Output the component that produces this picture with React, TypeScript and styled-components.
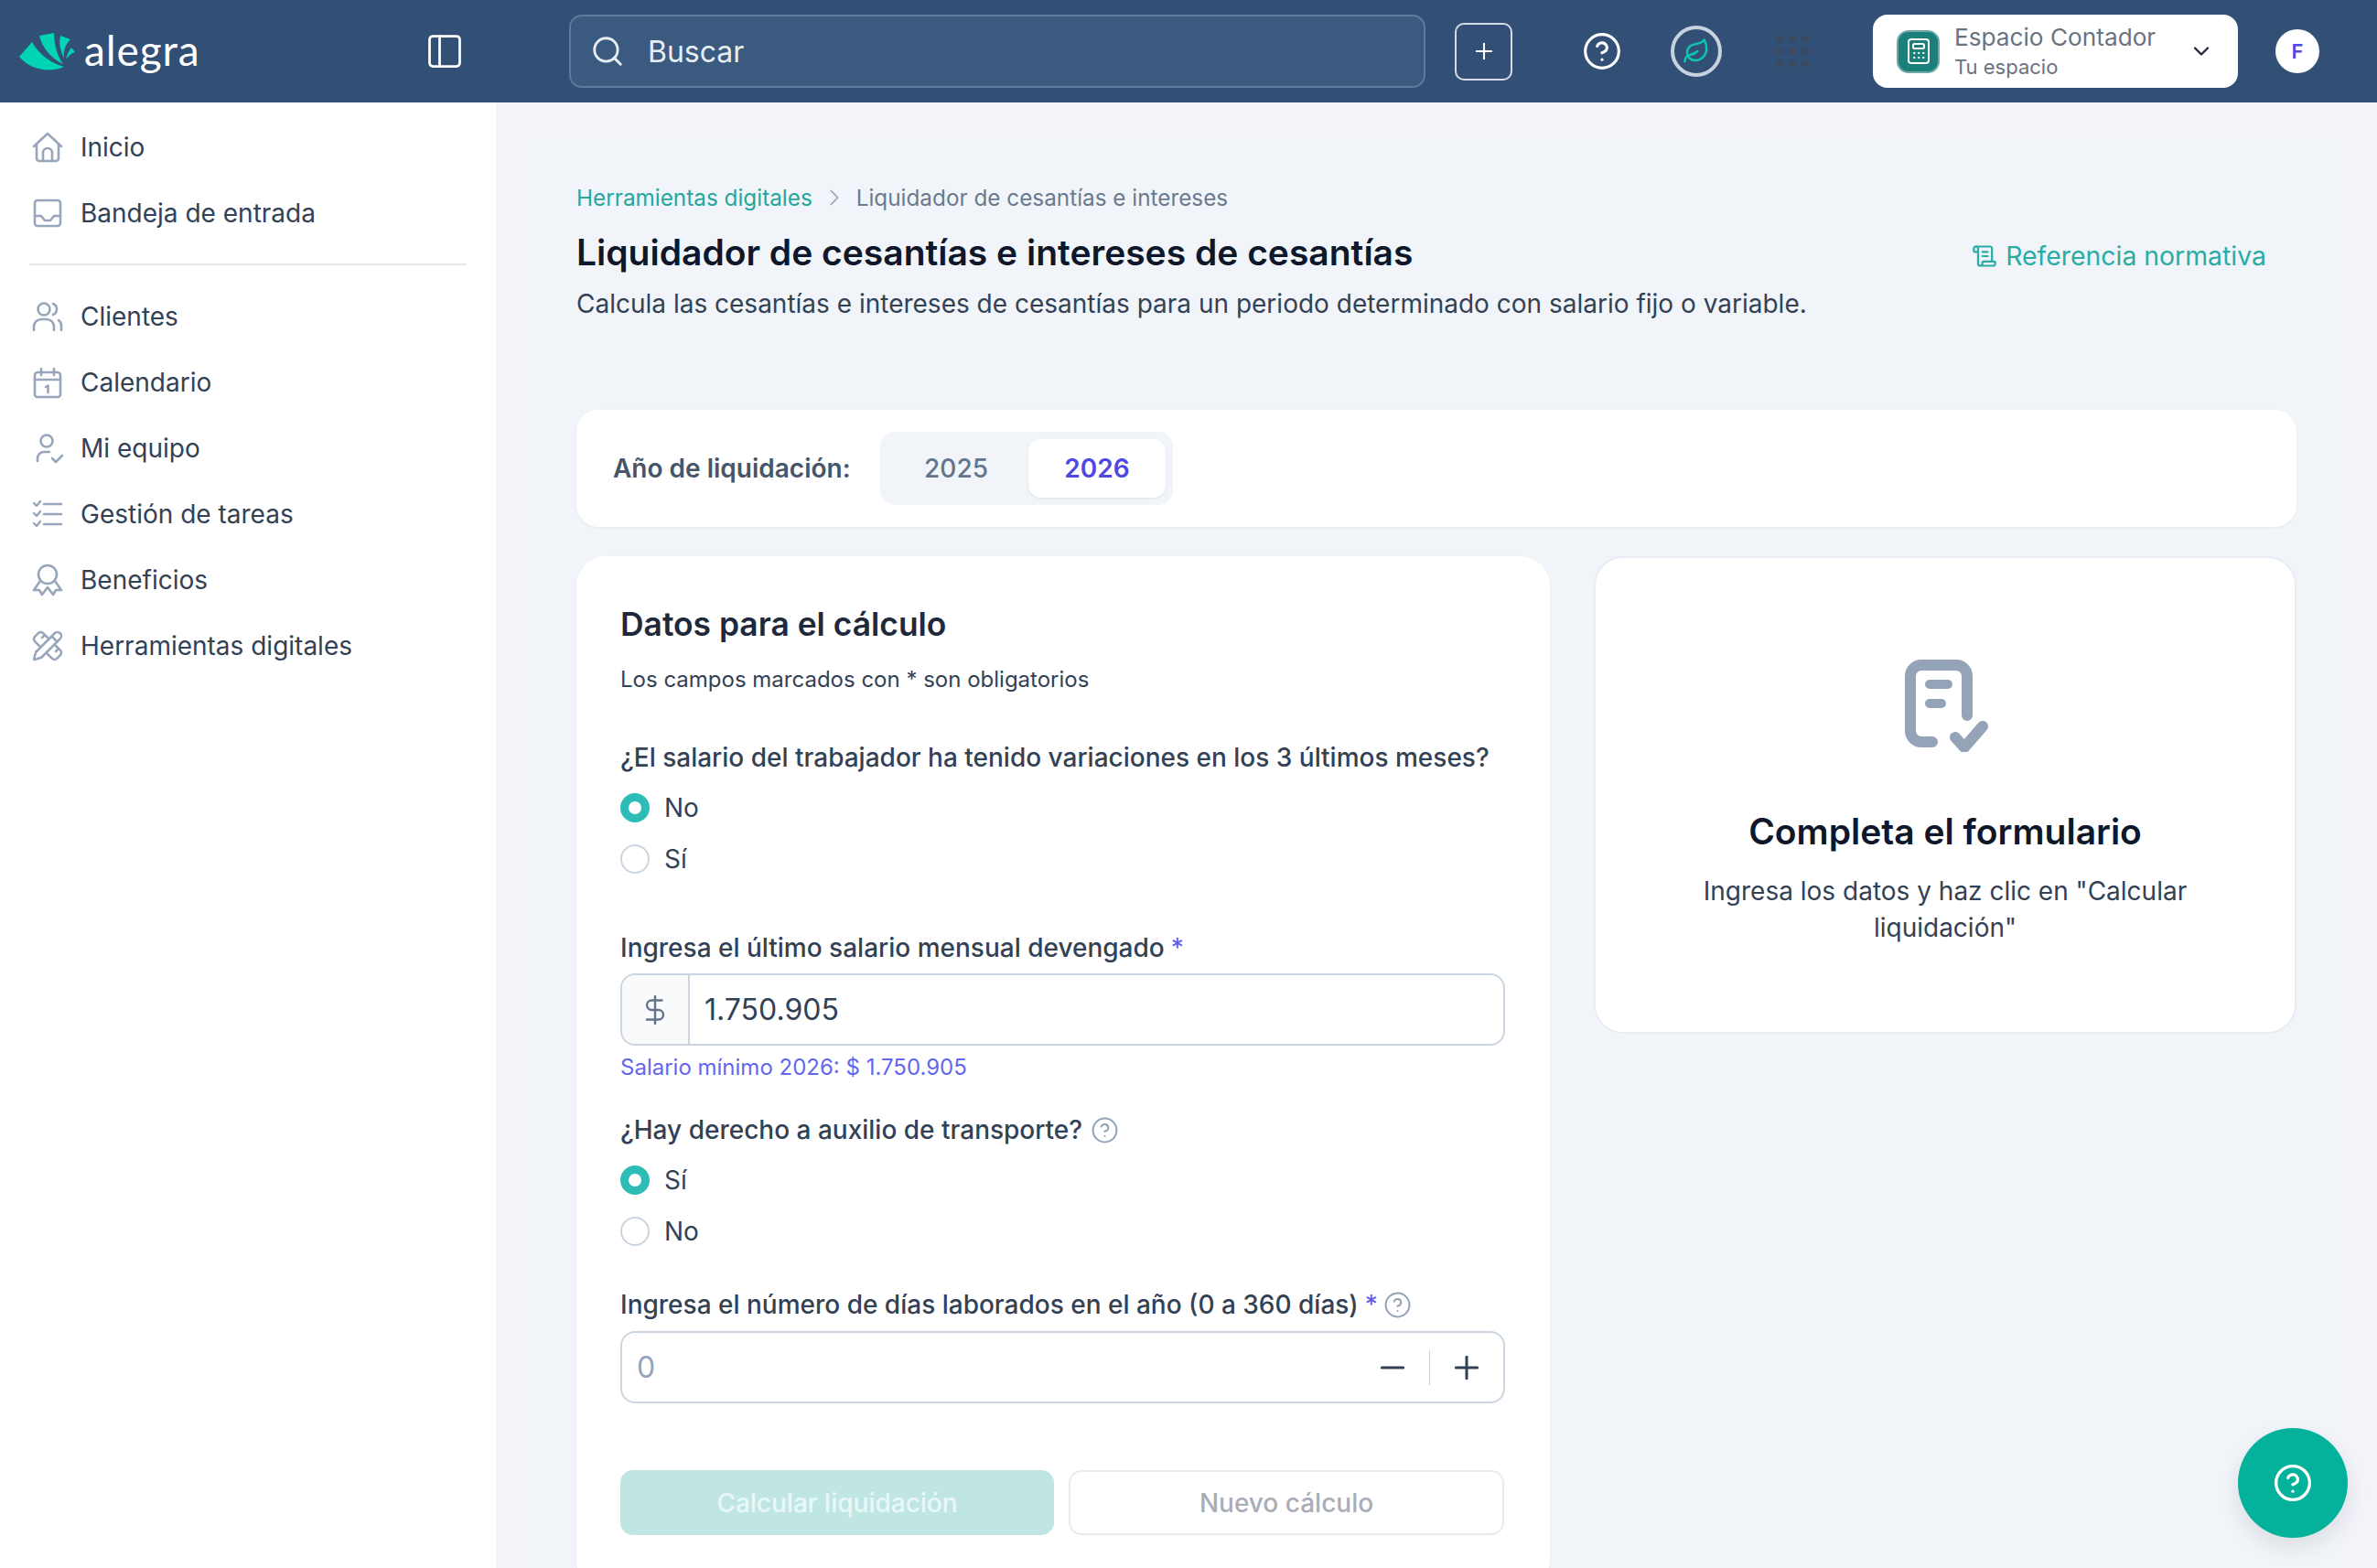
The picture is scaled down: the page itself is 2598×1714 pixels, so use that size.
import styled, { createGlobalStyle } from 'styled-components';
import {
  ChevronDown,
  ChevronRight,
  CircleHelp,
  DollarSign,
  Leaf,
  Minus,
  PanelLeft,
  PencilRuler,
  Plus,
  ScrollText,
  Search,
} from 'lucide-react';

const GlobalStyle = createGlobalStyle`
  * {
    box-sizing: border-box;
  }

  html,
  body {
    margin: 0;
    padding: 0;
    height: 100%;
    overflow: hidden;
    font-family: Inter, "Liberation Sans", sans-serif;
    background-color: #f3f4fa;
  }
`;

const Page = styled.div`
  display: grid;
  grid-template-columns: 542px 1fr;
  grid-template-rows: 112px 1fr;
  width: 2598px;
  height: 1714px;
  overflow: hidden;
`;

const Header = styled.header`
  grid-column: 1 / 3;
  display: flex;
  align-items: center;
  padding-left: 18px;
  background-color: #324f75;
  color: #fff;
`;

const LogoWrap = styled.div`
  display: flex;
  align-items: center;
  width: 490px;
  gap: 4px;
`;

const LogoText = styled.span`
  font-family: Lato, sans-serif;
  font-size: 46px;
  line-height: 50px;
  letter-spacing: 0.9px;
  color: #fff;
  margin-top: -3px;
`;

const IconButton = styled.button`
  display: flex;
  align-items: center;
  justify-content: center;
  padding: 0;
  border: 0;
  background: none;
  color: inherit;
`;

const ToggleButton = styled(IconButton)`
  margin-left: auto;
`;

const SearchBox = styled.div`
  display: flex;
  align-items: center;
  gap: 25px;
  width: 936px;
  height: 80px;
  margin-left: 114px;
  padding-left: 21px;
  background-color: #3b5a80;
  border: 2px solid #5f7a9b;
  border-radius: 14px;
  font-size: 32px;
  color: #e8edf3;
`;

const AddButton = styled(IconButton)`
  width: 63px;
  height: 63px;
  margin-left: 32px;
  border: 2px solid #d5dce6;
  border-radius: 10px;
`;

const HelpButton = styled(IconButton)`
  margin-left: 76px;
`;

const LeafButton = styled(IconButton)`
  width: 56px;
  height: 56px;
  margin-left: 53px;
  border: 4px solid #c8d1de;
  border-radius: 50%;
  color: #0cc7ad;
`;

const AppsGrid = styled.div`
  display: grid;
  grid-template-columns: repeat(3, 8px);
  grid-auto-rows: 8px;
  gap: 6px;
  margin-left: 59px;
`;

const AppsDot = styled.span`
  border-radius: 50%;
  background-color: #3c4a5f;
`;

const Workspace = styled.div`
  display: flex;
  align-items: center;
  width: 399px;
  height: 80px;
  margin-left: 70px;
  padding: 0 26px;
  background-color: #fff;
  border-radius: 16px;
  color: #1f2937;
`;

const WorkspaceIcon = styled.div`
  display: flex;
  align-items: center;
  justify-content: center;
  width: 47px;
  height: 47px;
  flex-shrink: 0;
  background-color: #1b7f7a;
  border: 2px solid #6fa9a7;
  border-radius: 13px;
`;

const WorkspaceText = styled.div`
  flex: 1;
  margin-left: 16px;
`;

const WorkspaceName = styled.div`
  font-size: 26.2px;
  line-height: 34px;
  color: #6b7280;
`;

const WorkspaceSub = styled.div`
  font-size: 22px;
  line-height: 30px;
  color: #6b7280;
`;

const Avatar = styled.div`
  display: flex;
  align-items: center;
  justify-content: center;
  width: 48px;
  height: 48px;
  margin-left: 41px;
  border-radius: 50%;
  background-color: #fff;
  color: #4f46e5;
  font-size: 22px;
  font-weight: 600;
`;

const Sidebar = styled.nav`
  padding: 13px 32px 0;
  background-color: #fff;
`;

const NavItem = styled.a`
  display: flex;
  align-items: center;
  gap: 18px;
  height: 72px;
  font-size: 28px;
  color: #334155;
`;

const NavIcon = styled.span`
  display: flex;
  align-items: center;
  justify-content: center;
  width: 36px;
  height: 36px;
  margin-left: 2px;
  color: #98a6bc;
`;

const NavDivider = styled.hr`
  height: 2px;
  margin: 19px 0 20px;
  border: 0;
  background-color: #e5e7eb;
`;

const Main = styled.main`
  padding: 40px 41px 0 40px;
  min-width: 0;
`;

const Panel = styled.div`
  height: 100%;
  padding: 48px 47px 0 48px;
  background-color: #f1f5f9;
`;

const Breadcrumb = styled.div`
  display: flex;
  align-items: center;
  gap: 9px;
  font-size: 24.3px;
  line-height: 32px;
  color: #6b7a90;
`;

const CrumbLink = styled.a`
  color: #27a59f;
`;

const TitleRow = styled.div`
  display: flex;
  align-items: flex-start;
  justify-content: space-between;
  margin-top: 18px;
`;

const Title = styled.h1`
  margin: 0;
  font-size: 39px;
  line-height: 52px;
  font-weight: 600;
  color: #0f172a;
`;

const RefLink = styled.a`
  display: flex;
  align-items: center;
  gap: 9px;
  margin: 10px 33px 0 0;
  font-size: 28.4px;
  line-height: 40px;
  color: #2aaca6;
`;

const Subtitle = styled.p`
  margin: 10px 0 0;
  font-size: 28px;
  line-height: 40px;
  color: #334155;
`;

const YearCard = styled.section`
  display: flex;
  align-items: center;
  height: 128px;
  margin-top: 96px;
  padding: 0 40px;
  background-color: #fff;
  border-radius: 24px;
  box-shadow: 0 1px 3px rgba(15, 23, 42, 0.06);
`;

const YearLabel = styled.span`
  width: 292px;
  font-size: 28px;
  font-weight: 600;
  color: #475569;
`;

const YearTabs = styled.div`
  display: flex;
  align-items: center;
  justify-content: flex-end;
  gap: 4px;
  width: 320px;
  height: 80px;
  padding: 0 8px;
  background-color: #f1f5f9;
  border-radius: 16px;
`;

const YearTab = styled.button<{ $active?: boolean }>`
  width: 151px;
  height: 64px;
  padding: 0;
  border: 0;
  border-radius: 14px;
  font-family: inherit;
  font-size: 28px;
  font-weight: ${({ $active }) => ($active ? 600 : 500)};
  color: ${({ $active }) => ($active ? '#4f46e5' : '#64748b')};
  background-color: ${({ $active }) => ($active ? '#fff' : 'transparent')};
  box-shadow: ${({ $active }) => ($active ? '0 1px 3px rgba(15, 23, 42, 0.08)' : 'none')};
`;

const Columns = styled.div`
  display: grid;
  grid-template-columns: 1064px 768px;
  align-items: start;
  gap: 48px;
  margin-top: 32px;
`;

const FormCard = styled.section`
  padding: 51px 49px 60px 48px;
  background-color: #fff;
  border-radius: 32px;
  box-shadow: 0 1px 3px rgba(15, 23, 42, 0.06);
`;

const FormTitle = styled.h2`
  margin: 0;
  font-size: 35.4px;
  line-height: 48px;
  font-weight: 600;
  color: #1e293b;
`;

const FormNote = styled.p`
  margin: 18px 0 0;
  font-size: 24px;
  line-height: 36px;
  color: #334155;
`;

const FieldLabel = styled.div<{ $top: number }>`
  display: flex;
  align-items: center;
  gap: 9px;
  margin-top: ${({ $top }) => $top}px;
  font-size: 28px;
  line-height: 40px;
  font-weight: 500;
  color: #334155;
`;

const Required = styled.span`
  margin: 0 -3px 0 -2px;
  font-weight: 400;
  color: #5b5be6;
`;

const HintIcon = styled(CircleHelp)`
  color: #94a3b8;
`;

const RadioGroup = styled.div`
  display: flex;
  flex-direction: column;
  gap: 16px;
  margin-top: 15px;
`;

const RadioRow = styled.label`
  display: flex;
  align-items: center;
  gap: 16px;
  height: 40px;
  font-size: 28px;
  color: #334155;
`;

const RadioDot = styled.span<{ $checked?: boolean }>`
  width: 32px;
  height: 32px;
  border-radius: 50%;
  background-color: #fff;
  border: ${({ $checked }) => ($checked ? '9px solid #2dbdb6' : '2px solid #cbd5e1')};
`;

const InputShell = styled.div<{ $top: number }>`
  display: flex;
  align-items: center;
  height: 79px;
  margin-top: ${({ $top }) => $top}px;
  background-color: #fff;
  border: 2px solid #cbd5e1;
  border-radius: 16px;
  overflow: hidden;
`;

const InputPrefix = styled.div`
  display: flex;
  align-items: center;
  justify-content: center;
  width: 74px;
  height: 100%;
  background-color: #f8fafc;
  border-right: 2px solid #cbd5e1;
  color: #64748b;
`;

const InputValue = styled.div`
  flex: 1;
  padding-left: 16px;
  font-size: 32px;
  color: #334155;
`;

const InputPlaceholder = styled.div`
  flex: 1;
  padding-left: 16px;
  font-size: 32px;
  color: #94a3b8;
`;

const StepGroup = styled.div`
  display: flex;
  align-items: center;
  color: #334155;
`;

const StepDivider = styled.span`
  width: 1px;
  height: 38px;
  margin: 0 20px;
  background-color: #cbd5e1;
`;

const StepEnd = styled.span`
  display: flex;
  margin-right: 20px;
`;

const Hint = styled.div`
  margin-top: 7px;
  font-size: 24px;
  line-height: 34px;
  color: #6366f1;
`;

const Actions = styled.div`
  display: grid;
  grid-template-columns: 474px 476px;
  gap: 16px;
  margin-top: 73px;
`;

const PrimaryBtn = styled.button`
  height: 71px;
  padding: 0;
  border: 0;
  border-radius: 14px;
  background-color: #c0e6e4;
  font-family: inherit;
  font-size: 28px;
  font-weight: 500;
  color: #e9f8f7;
`;

const GhostBtn = styled.button`
  height: 71px;
  padding: 0;
  border: 2px solid #e8ebf0;
  border-radius: 14px;
  background-color: #fff;
  font-family: inherit;
  font-size: 28px;
  font-weight: 500;
  color: #a8adb8;
`;

const EmptyCard = styled.section`
  display: flex;
  flex-direction: column;
  align-items: center;
  height: 522px;
  padding: 111px 90px 0;
  background-color: #fff;
  border: 2px solid #e8edf3;
  border-radius: 32px;
  text-align: center;
`;

const EmptyIcon = styled.svg`
  margin-left: 2px;
`;

const EmptyTitle = styled.h3`
  margin: 61px 0 0;
  font-size: 39px;
  line-height: 52px;
  font-weight: 600;
  color: #0f172a;
`;

const EmptyText = styled.p`
  margin: 19px 0 0;
  font-size: 28px;
  line-height: 40px;
  color: #334155;
`;

const Fab = styled.button`
  position: fixed;
  left: 2446px;
  top: 1561px;
  display: flex;
  align-items: center;
  justify-content: center;
  width: 120px;
  height: 120px;
  padding: 0;
  border: 0;
  border-radius: 50%;
  background-color: #04b29c;
  color: #fff;
  box-shadow: 0 10px 24px rgba(15, 23, 42, 0.1);
`;

const LogoMark = () => (
  <svg width="70" height="44" viewBox="8 9 70 44" fill="#00d4b4">
    <path d="M11 37 L25 21 C33 35 46 44 60 48 C47 54 24 53 11 37 Z" />
    <path d="M33 14 L49 11 C49 24 53 37 59 45 C46 39 36 27 33 14 Z" />
    <path d="M56 14 L67 18 C62 23 59 30 60 39 C56 30 54 22 56 14 Z" />
    <path d="M68 27 L72 32 C68 33 65 36 62 40 C63 35 65 31 68 27 Z" />
  </svg>
);

const HomeIcon = () => (
  <svg width="34" height="34" viewBox="0 0 34 34" fill="none" stroke="currentColor" strokeWidth="2.6" strokeLinecap="round" strokeLinejoin="round">
    <path d="M2 16 L17 2 L32 16" />
    <path d="M5 14 V29 a3 3 0 0 0 3 3 H26 a3 3 0 0 0 3-3 V14" />
    <path d="M12 32 V23 a5 5 0 0 1 10 0 V32" />
  </svg>
);

const InboxIcon = () => (
  <svg width="32" height="32" viewBox="0 0 32 32" fill="none" stroke="currentColor" strokeWidth="2.6" strokeLinecap="round" strokeLinejoin="round">
    <rect x="2" y="2" width="28" height="28" rx="3" />
    <path d="M2 19 h7 l4 5 h6 l4-5 h7" />
  </svg>
);

const UsersIcon = () => (
  <svg width="34" height="34" viewBox="0 0 34 34" fill="none" stroke="currentColor" strokeWidth="2.6" strokeLinecap="round" strokeLinejoin="round">
    <circle cx="13" cy="9" r="6.5" />
    <path d="M23 3 a6.5 6.5 0 0 1 0 12" />
    <path d="M2 32 v-4 a8 8 0 0 1 8-8 h6 a8 8 0 0 1 8 8 v4" />
    <path d="M29 21 a7 7 0 0 1 3 6 v5" />
  </svg>
);

const CalendarIcon = () => (
  <svg width="36" height="36" viewBox="0 0 36 36" fill="none" stroke="currentColor" strokeWidth="2.6" strokeLinecap="round" strokeLinejoin="round">
    <rect x="4" y="7" width="28" height="27" rx="3" />
    <path d="M4 15 H32" />
    <path d="M11 3 V10 M25 3 V10" />
    <path d="M16 23 l2.5-1.5 V29" />
  </svg>
);

const TeamIcon = () => (
  <svg width="36" height="36" viewBox="0 0 36 36" fill="none" stroke="currentColor" strokeWidth="2.6" strokeLinecap="round" strokeLinejoin="round">
    <circle cx="17" cy="10" r="6.5" />
    <path d="M7 32 v-3 a7 7 0 0 1 7-7 h6" />
    <path d="M23 29 l4 4 l7-7" />
  </svg>
);

const TasksIcon = () => (
  <svg width="36" height="36" viewBox="0 0 36 36" fill="none" stroke="currentColor" strokeWidth="2.4" strokeLinecap="round" strokeLinejoin="round">
    <path d="M14 7 H33 M14 18 H33 M14 29 H33" />
    <path d="M3 6 l3 3 l4-5 M3 17 l3 3 l4-5 M3 28 l3 3 l4-5" />
  </svg>
);

const AwardIcon = () => (
  <svg width="36" height="36" viewBox="0 0 36 36" fill="none" stroke="currentColor" strokeWidth="2.6" strokeLinecap="round" strokeLinejoin="round">
    <circle cx="18" cy="12" r="10" />
    <path d="M10 19 L3 29 h6 l3 5 l6-8 l6 8 l3-5 h6 L26 19" />
  </svg>
);

const CalculatorIcon = () => (
  <svg width="30" height="30" viewBox="0 0 30 30" fill="none" stroke="#fff" strokeWidth="2" strokeLinecap="round" strokeLinejoin="round">
    <rect x="4" y="2" width="22" height="26" rx="3" />
    <rect x="9" y="7" width="12" height="5" rx="1.5" />
    <path d="M10 17 h.5 M15 17 h.5 M20 17 h.5 M10 22 h.5 M15 22 h.5 M20 22 h.5" />
  </svg>
);

const DocCheckIcon = () => (
  <EmptyIcon width="91" height="101" viewBox="0 0 91 101" fill="none" stroke="#94a3b8" strokeWidth="12" strokeLinecap="round" strokeLinejoin="round">
    <path d="M30 90 H18 a12 12 0 0 1-12-12 V18 a12 12 0 0 1 12-12 H56 a12 12 0 0 1 12 12 V61" />
    <path d="M27 27 H47 M27 48 H40" strokeWidth="10" />
    <path d="M55 85 L65 96 L85 73" />
  </EmptyIcon>
);

const navTop = [
  { label: 'Inicio', icon: <HomeIcon /> },
  { label: 'Bandeja de entrada', icon: <InboxIcon /> },
];

const navBottom = [
  { label: 'Clientes', icon: <UsersIcon /> },
  { label: 'Calendario', icon: <CalendarIcon /> },
  { label: 'Mi equipo', icon: <TeamIcon /> },
  { label: 'Gestión de tareas', icon: <TasksIcon /> },
  { label: 'Beneficios', icon: <AwardIcon /> },
  { label: 'Herramientas digitales', icon: <PencilRuler size={36} strokeWidth={1.7} /> },
];

const App = () => (
  <Page>
    <GlobalStyle />
    <Header>
      <LogoWrap>
        <LogoMark />
        <LogoText>alegra</LogoText>
        <ToggleButton>
          <PanelLeft size={44} strokeWidth={1.5} />
        </ToggleButton>
      </LogoWrap>
      <SearchBox>
        <Search size={38} strokeWidth={1.8} />
        Buscar
      </SearchBox>
      <AddButton>
        <Plus size={28} strokeWidth={1.8} />
      </AddButton>
      <HelpButton>
        <CircleHelp size={44} strokeWidth={1.7} />
      </HelpButton>
      <LeafButton>
        <Leaf size={30} strokeWidth={2} />
      </LeafButton>
      <AppsGrid>
        {Array.from({ length: 9 }).map((_, i) => (
          <AppsDot key={i} />
        ))}
      </AppsGrid>
      <Workspace>
        <WorkspaceIcon>
          <CalculatorIcon />
        </WorkspaceIcon>
        <WorkspaceText>
          <WorkspaceName>Espacio Contador</WorkspaceName>
          <WorkspaceSub>Tu espacio</WorkspaceSub>
        </WorkspaceText>
        <ChevronDown size={28} strokeWidth={2} />
      </Workspace>
      <Avatar>F</Avatar>
    </Header>

    <Sidebar>
      {navTop.map((item) => (
        <NavItem key={item.label}>
          <NavIcon>{item.icon}</NavIcon>
          {item.label}
        </NavItem>
      ))}
      <NavDivider />
      {navBottom.map((item) => (
        <NavItem key={item.label}>
          <NavIcon>{item.icon}</NavIcon>
          {item.label}
        </NavItem>
      ))}
    </Sidebar>

    <Main>
      <Panel>
        <Breadcrumb>
          <CrumbLink>Herramientas digitales</CrumbLink>
          <ChevronRight size={30} strokeWidth={1.4} color="#94a3b8" />
          Liquidador de cesantías e intereses
        </Breadcrumb>
        <TitleRow>
          <Title>Liquidador de cesantías e intereses de cesantías</Title>
          <RefLink>
            <ScrollText size={28} strokeWidth={1.9} />
            Referencia normativa
          </RefLink>
        </TitleRow>
        <Subtitle>Calcula las cesantías e intereses de cesantías para un periodo determinado con salario fijo o variable.</Subtitle>

        <YearCard>
          <YearLabel>Año de liquidación:</YearLabel>
          <YearTabs>
            <YearTab>2025</YearTab>
            <YearTab $active>2026</YearTab>
          </YearTabs>
        </YearCard>

        <Columns>
          <FormCard>
            <FormTitle>Datos para el cálculo</FormTitle>
            <FormNote>Los campos marcados con * son obligatorios</FormNote>

            <FieldLabel $top={47}>¿El salario del trabajador ha tenido variaciones en los 3 últimos meses?</FieldLabel>
            <RadioGroup>
              <RadioRow>
                <RadioDot $checked />
                No
              </RadioRow>
              <RadioRow>
                <RadioDot />
                Sí
              </RadioRow>
            </RadioGroup>

            <FieldLabel $top={57}>
              Ingresa el último salario mensual devengado <Required>*</Required>
            </FieldLabel>
            <InputShell $top={8}>
              <InputPrefix>
                <DollarSign size={36} strokeWidth={1.6} />
              </InputPrefix>
              <InputValue>1.750.905</InputValue>
            </InputShell>
            <Hint>Salario mínimo 2026: $ 1.750.905</Hint>

            <FieldLabel $top={31}>
              ¿Hay derecho a auxilio de transporte? <HintIcon size={31} strokeWidth={1.6} />
            </FieldLabel>
            <RadioGroup>
              <RadioRow>
                <RadioDot $checked />
                Sí
              </RadioRow>
              <RadioRow>
                <RadioDot />
                No
              </RadioRow>
            </RadioGroup>

            <FieldLabel $top={40}>
              Ingresa el número de días laborados en el año (0 a 360 días) <Required>*</Required>
              <HintIcon size={31} strokeWidth={1.6} />
            </FieldLabel>
            <InputShell $top={9}>
              <InputPlaceholder>0</InputPlaceholder>
              <StepGroup>
                <Minus size={40} strokeWidth={1.8} />
                <StepDivider />
                <StepEnd>
                  <Plus size={40} strokeWidth={1.8} />
                </StepEnd>
              </StepGroup>
            </InputShell>

            <Actions>
              <PrimaryBtn>Calcular liquidación</PrimaryBtn>
              <GhostBtn>Nuevo cálculo</GhostBtn>
            </Actions>
          </FormCard>

          <EmptyCard>
            <DocCheckIcon />
            <EmptyTitle>Completa el formulario</EmptyTitle>
            <EmptyText>Ingresa los datos y haz clic en "Calcular liquidación"</EmptyText>
          </EmptyCard>
        </Columns>
      </Panel>
    </Main>

    <Fab>
      <CircleHelp size={44} strokeWidth={1.8} />
    </Fab>
  </Page>
);

export default App;
